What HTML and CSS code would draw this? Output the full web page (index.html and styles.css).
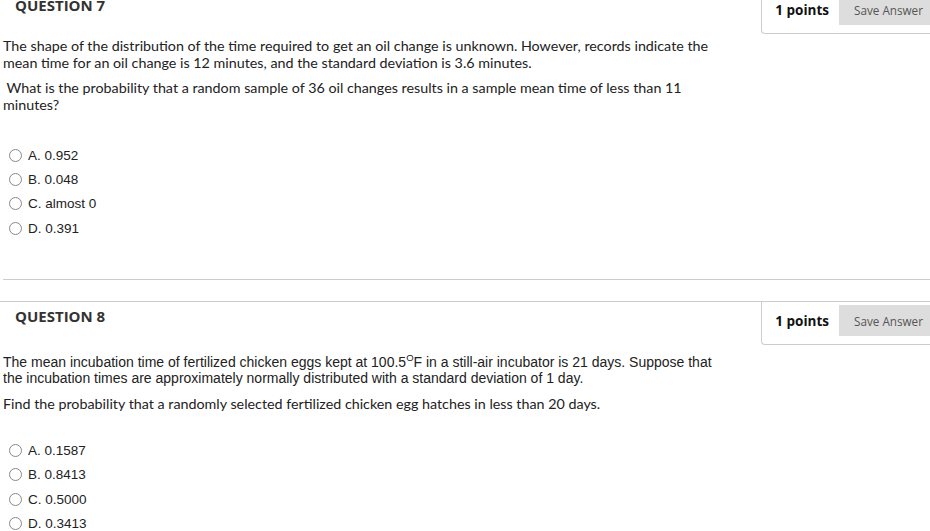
FILE: index.html
```html
<!DOCTYPE html>
<html lang="en">
<head>
<meta charset="utf-8">
<title>Quiz</title>
<link rel="stylesheet" href="styles.css">
</head>
<body>
<div class="page">
  <section class="question">
    <header class="qhead">
      <h2 class="qtitle">QUESTION 7</h2>
      <div class="points">
        <span class="pts">1 points</span>
        <button class="save" type="button">Save Answer</button>
      </div>
    </header>
    <div class="qbody qbody-7">
      <p class="lato p1">The shape of the distribution of the time required to get an oil change is unknown. However, records indicate the mean time for an oil change is 12 minutes, and the standard deviation is 3.6 minutes.</p>
      <p class="lato p2">&nbsp;What is the probability that a random sample of 36 oil changes results in a sample mean time of less than 11 minutes?</p>
    </div>
    <ul class="options">
      <li class="opt"><span class="radio"></span><span class="lbl">A. 0.952</span></li>
      <li class="opt"><span class="radio"></span><span class="lbl">B. 0.048</span></li>
      <li class="opt"><span class="radio"></span><span class="lbl">C. almost 0</span></li>
      <li class="opt"><span class="radio"></span><span class="lbl">D. 0.391</span></li>
    </ul>
    <hr class="sep">
  </section>

  <section class="question">
    <header class="qhead">
      <h2 class="qtitle">QUESTION 8</h2>
      <div class="points">
        <span class="pts">1 points</span>
        <button class="save" type="button">Save Answer</button>
      </div>
    </header>
    <div class="qbody qbody-8">
      <p class="arial p1">The mean incubation time of fertilized chicken eggs kept at 100.5<sup>O</sup>F in a still-air incubator is 21 days. Suppose that the incubation times are approximately normally distributed with a standard deviation of 1 day.</p>
      <p class="lato p2">Find the probability that a randomly selected fertilized chicken egg hatches in less than 20 days.</p>
    </div>
    <ul class="options">
      <li class="opt"><span class="radio"></span><span class="lbl">A. 0.1587</span></li>
      <li class="opt"><span class="radio"></span><span class="lbl">B. 0.8413</span></li>
      <li class="opt"><span class="radio"></span><span class="lbl">C. 0.5000</span></li>
      <li class="opt"><span class="radio"></span><span class="lbl">D. 0.3413</span></li>
    </ul>
  </section>
</div>
</body>
</html>
```

FILE: styles.css
```css
html, body {
  margin: 0;
  padding: 0;
  background: #fff;
  overflow: hidden;
}

body {
  font-family: Lato, "Open Sans", sans-serif;
  color: #222;
}

.page {
  margin-top: -10px;
  width: 938px;
}

.question {
  border-top: 1px solid #ccc;
}

.qhead {
  display: flex;
  justify-content: space-between;
  align-items: flex-start;
}

.qtitle {
  margin: 0;
  padding: 5px 15px 0;
  font-family: "Open Sans", sans-serif;
  font-weight: 700;
  font-size: 15px;
  line-height: 19px;
  color: #333;
}

.points {
  display: flex;
  align-items: center;
  gap: 10px;
  padding: 3px 0 8px 13px;
  border-left: 1px solid #ccc;
  border-bottom: 1px solid #ccc;
  border-bottom-left-radius: 4px;
}

.pts {
  font-family: "Open Sans", sans-serif;
  font-weight: 700;
  font-size: 13.5px;
  color: #111;
}

.save {
  height: 31px;
  width: 99px;
  padding: 0;
  border: none;
  background: #ddd;
  font-family: "Open Sans", sans-serif;
  font-size: 11.7px;
  color: #555;
}

.qbody {
  width: 720px;
  padding-left: 3px;
}

.qbody p {
  margin: 0;
}

.lato {
  font-family: Lato, sans-serif;
  font-size: 14.3px;
  line-height: 17px;
}

.arial {
  font-family: "Liberation Sans", Arial, sans-serif;
  font-size: 14px;
  line-height: 16px;
}

.arial sup {
  font-size: 9.5px;
  line-height: 0;
}

.qbody-7 {
  margin-top: 3px;
}

.qbody-7 .p2 {
  margin-top: 8px;
}

.qbody-8 {
  margin-top: 9px;
}

.qbody-8 .p2 {
  margin-top: 9px;
}

.options {
  list-style: none;
  margin: 0;
  padding: 0 0 0 9px;
}

.qbody-7 + .options {
  margin-top: 30px;
}

.qbody-8 + .options {
  margin-top: 26px;
}

.opt {
  display: flex;
  align-items: center;
  height: 24.33px;
}

.radio {
  width: 11px;
  height: 11px;
  border: 1px solid #888;
  border-radius: 50%;
  flex: none;
  margin-right: 6px;
}

.lbl {
  font-family: "Liberation Sans", Arial, sans-serif;
  font-size: 13.5px;
  color: #222;
}

.sep {
  margin: 39px 0 21px 3px;
  border: none;
  border-top: 1px solid #ccc;
  height: 0;
}
```
